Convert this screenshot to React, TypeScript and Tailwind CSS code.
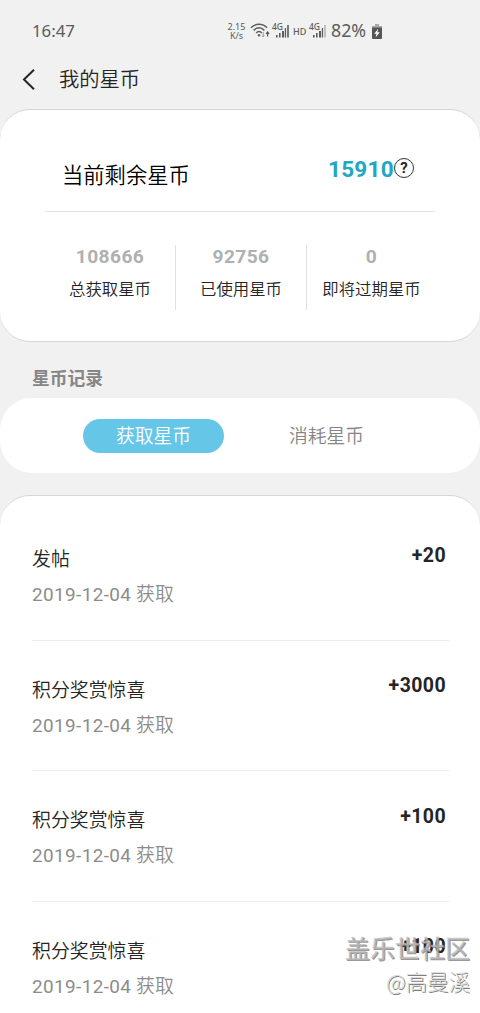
import clsx from "clsx";

interface CoinRecord {
    title: string;
    date: string;
    amount: string;
}

const stats = [
    { value: "108666", label: "总获取星币" },
    { value: "92756", label: "已使用星币" },
    { value: "0", label: "即将过期星币" },
];

const records: CoinRecord[] = [
    { title: "发帖", date: "2019-12-04", amount: "+20" },
    { title: "积分奖赏惊喜", date: "2019-12-04", amount: "+3000" },
    { title: "积分奖赏惊喜", date: "2019-12-04", amount: "+100" },
    { title: "积分奖赏惊喜", date: "2019-12-04", amount: "+100" },
];

function WifiIcon() {
    return (
        <svg width="20" height="16" viewBox="0 0 20 16" fill="none" stroke="#5c5c5c" strokeWidth="1.5">
            <path d="M1 4.800C5.500.2 12.500.2 17 4.800" />
            <path d="M3.600 7.400C7 4 11 4 14.400 7.400" />
            <path d="M6.200 9.900c1.800-1.800 3.800-1.800 5.600 0" />
            <circle cx="9" cy="12.300" r="1.200" fill="#5c5c5c" stroke="none" />
            <path d="M13.200 9v5M12 12.600l1.200 1.400 1.200-1.400" stroke="#999" strokeWidth="1" />
            <path d="M17.600 13.500V9M16 10.800l1.600-1.800 1.600 1.800" strokeWidth="1.200" />
        </svg>
    );
}

function SignalIcon({ weak }: { weak?: boolean }) {
    return (
        <span className="relative block h-[16px] w-[17px]">
            <span className="absolute left-0 top-0 text-[8.500px] leading-[8px] font-medium">4G</span>
            <svg className="absolute inset-0" width="17" height="16" viewBox="0 0 17 16" fill="#5c5c5c">
                <path d="M4 12h1.600v2.500H4zM7 10h1.600v4.500H7zM10 8h2v6.500h-2z" />
                <path d="M12.800 5h1.300v9.500h-1.300z" />
                <path d="M15.200 2h1.600v12.500h-1.600z" fill={weak ? "#b5b5b5" : "#5c5c5c"} />
            </svg>
        </span>
    );
}

function StatusBar() {
    return (
        <div className="flex h-[58px] items-center pt-[4px] pl-8 font-['Noto_Sans',sans-serif] text-[#5c5c5c]">
            <span className="w-[195px] text-[16.800px] leading-none">16:47</span>
            <span className="flex w-[19px] flex-col items-center text-[9px] leading-[9px]">
                <span>2.15</span>
                <span>K/s</span>
            </span>
            <span className="ml-[4px]"><WifiIcon /></span>
            <span className="ml-[2px]"><SignalIcon /></span>
            <span className="ml-[4px] w-[13px] text-[9px] leading-none font-medium">HD</span>
            <span className="ml-[3px]"><SignalIcon weak /></span>
            <span className="ml-[5px] w-[37px] text-[17.800px] leading-none">82%</span>
            <svg className="ml-[4px]" width="10" height="15" viewBox="0 0 10 15">
                <path d="M3 0h4v2h3v2H0V2h3z" fill="#aaa" />
                <path d="M0 3.500h10V14a1 1 0 0 1-1 1H1a1 1 0 0 1-1-1z" fill="#555" />
                <path d="M6.200 4.800 2.200 9.800h2.300l-.9 3.700L7.800 8.300H5.400z" fill="#fff" />
            </svg>
        </div>
    );
}

export default function App() {
    return (
        <div className="relative h-[1013px] w-[480px] overflow-hidden bg-[#f1f1f1] font-[Roboto,'Noto_Sans_CJK_SC',sans-serif] text-[#252525]">
            <StatusBar />

            <header className="flex h-[51px] items-center pb-[9px] pl-[22px]">
                <svg width="13" height="21" viewBox="0 0 13 21" fill="none" stroke="#252525" strokeWidth="2">
                    <path d="M12 .8 2 10.500l10 9.700" />
                </svg>
                <h1 className="ml-[24px] pt-[2px] text-[20.300px] leading-none font-[350]">我的星币</h1>
            </header>

            {/* Balance */}
            <section className="h-[233px] rounded-[30px] border-y border-[#d6d6d6] bg-white px-[45px]">
                <div className="flex h-[102px] justify-between border-b border-[#e3e3e3] pl-[17px] pr-[21px]">
                    <h2 className="pt-[54px] text-[21.300px] leading-[24px] font-[350] text-black">当前剩余星币</h2>
                    <div className="flex pt-[47px]">
                        <span className="text-[22.500px] leading-[25px] font-bold tracking-[0.3px] text-[#22a6c4]">15910</span>
                        <span className="mt-px flex h-5 w-5 items-center justify-center rounded-full border border-[#333] text-[15px] leading-none font-bold">?</span>
                    </div>
                </div>
                <div className="mt-[33px] flex h-[65px]">
                    {stats.map((stat, index) => (
                        <div
                            key={stat.label}
                            className={clsx("flex shrink-0 flex-col items-center", index < 2 ? "w-[131px] border-r border-[#e0e0e0]" : "w-[129px]")}
                        >
                            <span className="text-[19.200px] leading-[24px] font-bold tracking-[0.400px] text-[#b0b0b0]">{stat.value}</span>
                            <span className="mt-[11px] text-[16.400px] leading-[20px] font-[350] whitespace-nowrap">{stat.label}</span>
                        </div>
                    ))}
                </div>
            </section>

            <h3 className="h-[56px] pt-[27px] pl-8 text-[17.800px] leading-[20px] font-bold text-[#868686]">星币记录</h3>

            {/* Tabs */}
            <div className="flex h-[75px] items-center rounded-[32px] bg-white pl-[83px] text-[18.800px] leading-none font-[350]">
                <button className="flex h-[34px] w-[141px] items-center justify-center rounded-full bg-[#66c6e8] pt-[4px] text-white">获取星币</button>
                <button className="ml-[65px] pt-[4px] text-[#868686]">消耗星币</button>
            </div>

            {/* Records */}
            <section className="mt-[22px] h-[560px] rounded-t-[30px] border-t border-[#d6d6d6] bg-white px-8 pt-[14px]">
                {records.map((record, index) => (
                    <div key={index} className="flex h-[130.670px] w-[417px] justify-between border-b border-[#ececec] pr-[3px]">
                        <div className="pt-[38px]">
                            <p className="text-[18.900px] leading-[24px] font-[350]">{record.title}</p>
                            <p className="mt-[11px] text-[18.900px] leading-[24px] text-[#8c8c8c]">
                                <span className="tracking-[0.400px]">{record.date}</span>
                                <span className="font-[350]"> 获取</span>
                            </p>
                        </div>
                        <span className="pt-[33.500px] text-[19.500px] leading-[24px] font-bold tracking-[0.400px]">{record.amount}</span>
                    </div>
                ))}
            </section>

            {/* Watermark */}
            <div className="absolute right-[10px] bottom-[20px] text-right font-['Noto_Sans_CJK_SC',sans-serif]">
                <p className="text-[25px] leading-[28px] font-medium text-[#bcbcbc]/75 [text-shadow:1px_1px_0_#777777c0]">盖乐世社区</p>
                <p className="mt-[8px] text-[21.500px] leading-[24px] font-light text-[#dcdcdc] [text-shadow:1px_1px_0_#808080]">@高曼溪</p>
            </div>
        </div>
    );
}
